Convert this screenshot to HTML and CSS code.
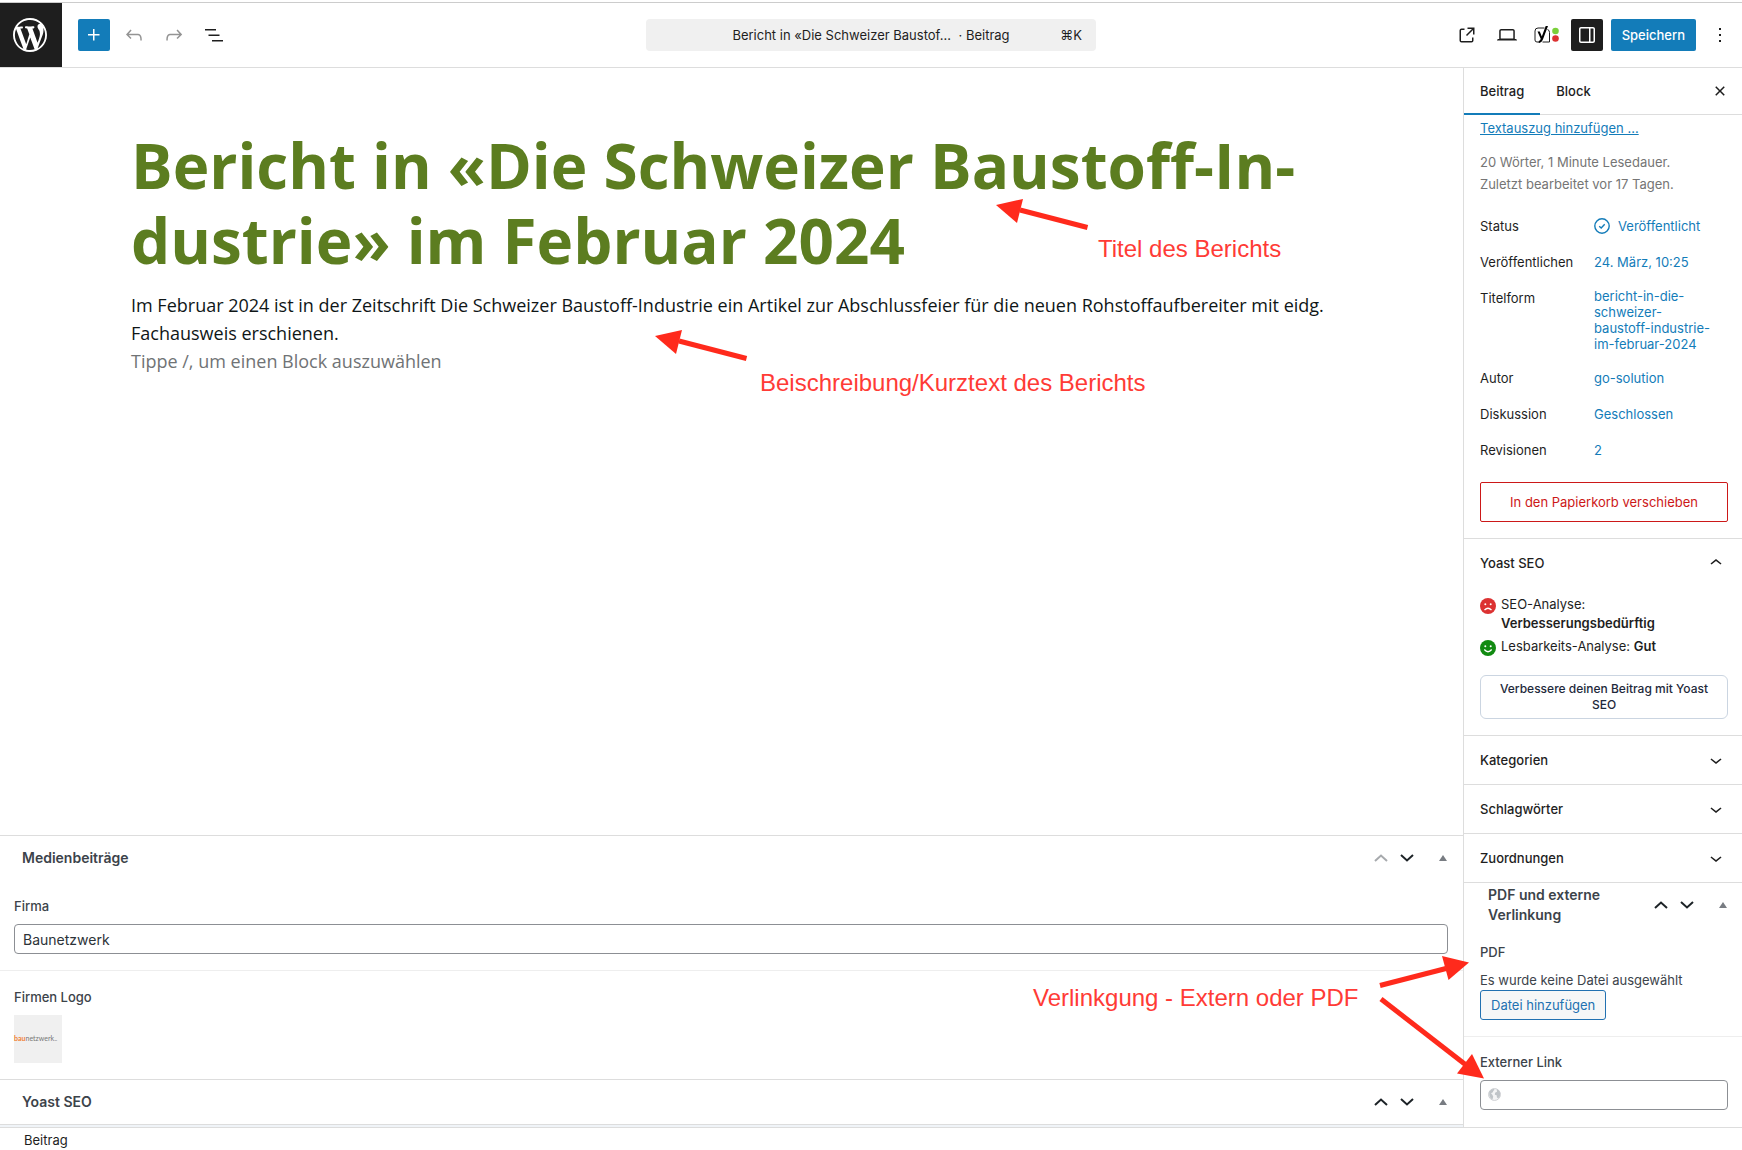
FILE: index.html
```html
<!DOCTYPE html>
<html lang="de">
<head>
<meta charset="utf-8">
<title>Beitrag bearbeiten</title>
<meta name="viewport" content="width=device-width, initial-scale=1">
<link rel="stylesheet" href="styles.css">
</head>
<body>
<svg class="sprite" aria-hidden="true">
  <symbol id="chevron-down" viewBox="0 0 24 24"><path d="M17.5 11.6L12 16l-5.5-4.4.9-1.2L12 14l4.5-3.6 1 1.2z"/></symbol>
  <symbol id="chevron-up" viewBox="0 0 24 24"><path d="M6.5 12.4L12 8l5.5 4.4-.9 1.2L12 10l-4.5 3.6-1-1.2z"/></symbol>
  <symbol id="order-up" viewBox="0 0 14 8"><path d="M1 7l6-5.500L13 7" fill="none" stroke="currentColor" stroke-width="2"/></symbol>
  <symbol id="order-down" viewBox="0 0 14 8"><path d="M1 1l6 5.500L13 1" fill="none" stroke="currentColor" stroke-width="2"/></symbol>
  <symbol id="triangle" viewBox="0 0 8 6"><path d="M4 0l4 6H0z"/></symbol>
</svg>

<header class="topbar">
  <a class="wp-home" href="#" aria-label="Beiträge anzeigen">
    <svg viewBox="0 0 20 20" width="34" height="34"><path d="M20 10c0-5.51-4.49-10-10-10C4.48 0 0 4.49 0 10c0 5.52 4.48 10 10 10 5.51 0 10-4.48 10-10zM7.78 15.37L4.37 6.22c.55-.02 1.17-.08 1.17-.08.5-.06.44-1.13-.06-1.11 0 0-1.45.11-2.37.11-.18 0-.37 0-.58-.01C4.12 2.69 6.87 1.11 10 1.11c2.33 0 4.45.87 6.05 2.34-.68-.11-1.65.39-1.65 1.58 0 .74.45 1.36.9 2.1.35.61.55 1.36.55 2.46 0 1.49-1.4 5-1.4 5l-3.03-8.37c.54-.02.82-.17.82-.17.5-.05.44-1.25-.06-1.22 0 0-1.44.12-2.38.12-.87 0-2.33-.12-2.33-.12-.5-.03-.56 1.2-.06 1.22l.92.08 1.26 3.41zM17.41 10c.24-.64.74-1.87.43-4.25.7 1.29 1.05 2.71 1.05 4.25 0 3.29-1.73 6.24-4.4 7.78.97-2.59 1.94-5.2 2.92-7.78zM6.1 18.09C3.12 16.65 1.11 13.53 1.11 10c0-1.3.23-2.48.72-3.59C3.25 10.3 4.67 14.2 6.1 18.09zm4.03-6.63l2.58 6.98c-.86.29-1.76.45-2.71.45-.79 0-1.57-.11-2.29-.33.81-2.38 1.62-4.74 2.42-7.1z"/></svg>
  </a>
  <div class="tools">
    <button class="icon-btn primary" aria-label="Block hinzufügen"><svg viewBox="0 0 24 24"><path d="M11 12.500V17.500H12.500V12.500H17.500V11H12.500V6H11V11H6V12.500H11Z"/></svg></button>
    <button class="icon-btn muted" aria-label="Rückgängig"><svg viewBox="0 0 24 24"><path d="M18.300 11.700c-.6-.6-1.400-.9-2.300-.9H6.700l2.900-3.300-1.100-1-4.500 5L8.500 16l1-1-2.700-2.700H16c.5 0 .9.2 1.300.5 1 1 1 3.400 1 4.500v.3h1.500v-.2c0-1.500 0-4.300-1.500-5.700z"/></svg></button>
    <button class="icon-btn muted" aria-label="Wiederholen"><svg viewBox="0 0 24 24"><path d="M15.600 6.500l-1.100 1 2.900 3.300H8c-.9 0-1.700.3-2.300.9-1.400 1.500-1.400 4.200-1.400 5.600v.2h1.500v-.3c0-1.100 0-3.500 1-4.500.3-.3.7-.5 1.300-.5h9.200L14.500 15l1.100 1.100 4.600-4.600-4.600-5z"/></svg></button>
    <button class="icon-btn" aria-label="Dokumentübersicht"><svg viewBox="0 0 24 24"><path d="M3 6h11v1.500H3V6Zm3.500 5.500h11V13h-11v-1.500ZM21 17H10v1.500h11V17Z"/></svg></button>
  </div>
  <button class="document-bar">
    <span class="document-title">Bericht in «Die Schweizer Baustof… <span class="document-type">· Beitrag</span></span>
    <span class="shortcut">⌘K</span>
  </button>
  <div class="settings">
    <a class="icon-btn" href="#" aria-label="Beitrag anzeigen"><svg viewBox="0 0 24 24"><path d="M19.500 4.500h-7V6h4.440l-5.970 5.970 1.060 1.060L18 7.060v4.440h1.500v-7Zm-13 1a2 2 0 0 0-2 2v10a2 2 0 0 0 2 2h10a2 2 0 0 0 2-2v-3H17v3a.5.5 0 0 1-.5.5h-10a.5.5 0 0 1-.5-.5v-10a.5.5 0 0 1 .5-.5h3V5.500h-3Z"/></svg></a>
    <button class="icon-btn" aria-label="Ansicht"><svg viewBox="0 0 24 24"><path d="M20.500 16h-.7V8c0-1.100-.9-2-2-2H6.200c-1.100 0-2 .9-2 2v8h-.7c-.8 0-1.500.7-1.500 1.500h20c0-.8-.7-1.500-1.500-1.500zM5.700 8c0-.3.2-.5.5-.5h11.600c.3 0 .5.2.5.5v7.600H5.700V8z"/></svg></button>
    <button class="icon-btn" aria-label="Yoast SEO"><svg class="yoast" viewBox="0 0 26 18"><path d="M10.500 2H4a3 3 0 0 0-3 3v9a2 2 0 0 0 2 2h3M13.500 3.500q2 .5 2 3V16H8.500" fill="none" stroke="#1e1e1e"/><path d="M3.500 5.500h2.300l2 5L11.700 0H14L9.300 12.500Q8 16.500 4.800 17v-2q1.700-.5 1.900-2.200z" fill="#000"/><circle cx="21.500" cy="5" r="3.300" fill="#7ad03a"/><circle cx="21.500" cy="12.500" r="3.300" fill="#dc3232"/></svg></button>
    <button class="icon-btn dark" aria-label="Einstellungen"><svg viewBox="0 0 24 24"><path d="M18 4H6c-1.100 0-2 .9-2 2v12c0 1.100.9 2 2 2h12c1.100 0 2-.9 2-2V6c0-1.100-.9-2-2-2zM5.500 18V6c0-.3.2-.5.5-.5h12c.3 0 .5.2.5.5v12c0 .3-.2.500-.5.500H6c-.3 0-.5-.2-.5-.5z" fill-rule="evenodd"/><path d="M14 5h1.500v14H14z"/></svg></button>
    <button class="save">Speichern</button>
    <button class="icon-btn" aria-label="Optionen"><svg viewBox="0 0 24 24"><path d="M13 19h-2v-2h2v2zm0-6h-2v-2h2v2zm0-6h-2V5h2v2z"/></svg></button>
  </div>
</header>

<div class="workspace">
  <main class="editor">
    <article class="canvas">
      <h1>Bericht in «Die Schweizer Baustoff-In&shy;dustrie» im Februar 2024</h1>
      <p>Im Februar 2024 ist in der Zeitschrift Die Schweizer Baustoff-Industrie ein Artikel zur Abschlussfeier für die neuen Rohstoffaufbereiter mit eidg. Fachausweis erschienen.</p>
      <p class="placeholder">Tippe /, um einen Block auszuwählen</p>
    </article>

    <section class="metabox">
      <header class="metabox-head">
        <h2>Medienbeiträge</h2>
        <div class="order">
          <button class="off" aria-label="Nach oben"><svg width="14" height="8"><use href="#order-up"/></svg></button>
          <button aria-label="Nach unten"><svg width="14" height="8"><use href="#order-down"/></svg></button>
          <button class="toggle" aria-label="Umschalten"><svg width="8" height="6"><use href="#triangle"/></svg></button>
        </div>
      </header>
      <div class="field">
        <label for="firma">Firma</label>
        <input id="firma" type="text" value="Baunetzwerk">
      </div>
      <div class="field ruled">
        <span class="field-label">Firmen Logo</span>
        <div class="logo"><span><b>bau</b>netzwerk<small>.biz</small></span></div>
      </div>
    </section>
    <section class="metabox">
      <header class="metabox-head">
        <h2>Yoast SEO</h2>
        <div class="order">
          <button aria-label="Nach oben"><svg width="14" height="8"><use href="#order-up"/></svg></button>
          <button aria-label="Nach unten"><svg width="14" height="8"><use href="#order-down"/></svg></button>
          <button class="toggle" aria-label="Umschalten"><svg width="8" height="6"><use href="#triangle"/></svg></button>
        </div>
      </header>
      <div class="seo-edge"></div>
    </section>
  </main>

  <aside class="sidebar">
    <div class="tabs">
      <button class="tab active">Beitrag</button>
      <button class="tab">Block</button>
      <button class="close" aria-label="Einstellungen schließen"><svg viewBox="0 0 24 24"><path d="M12 13.060l3.712 3.713 1.061-1.060L13.061 12l3.712-3.712-1.060-1.060L12 10.938 8.288 7.227l-1.061 1.060L10.939 12l-3.712 3.712 1.060 1.061L12 13.061z"/></svg></button>
    </div>

    <section class="summary">
      <a class="excerpt" href="#">Textauszug hinzufügen …</a>
      <p class="info">20 Wörter, 1 Minute Lesedauer.<br>Zuletzt bearbeitet vor 17 Tagen.</p>
      <dl class="facts">
        <dt>Status</dt>
        <dd><button><svg width="16" height="16" viewBox="0 0 16 16"><circle cx="8" cy="8" r="7.200" fill="none" stroke="currentColor" stroke-width="1.400"/><path d="M5.200 8.200l2 1.800 3.500-3.800" fill="none" stroke="currentColor" stroke-width="1.400"/></svg>Veröffentlicht</button></dd>
        <dt>Veröffentlichen</dt><dd><button>24. März, 10:25</button></dd>
        <dt>Titelform</dt><dd><button>bericht-in-die-schweizer-baustoff-industrie-im-februar-2024</button></dd>
        <dt>Autor</dt><dd><button>go-solution</button></dd>
        <dt>Diskussion</dt><dd><button>Geschlossen</button></dd>
        <dt>Revisionen</dt><dd><button>2</button></dd>
      </dl>
      <button class="trash">In den Papierkorb verschieben</button>
    </section>

    <section class="panel">
      <button class="panel-head">Yoast SEO<svg width="24" height="24"><use href="#chevron-up"/></svg></button>
      <ul class="scores">
        <li><svg width="16" height="16" viewBox="0 0 16 16"><circle cx="8" cy="8" r="8" fill="#dc3232"/><circle cx="5.300" cy="6.300" r="1" fill="#fff"/><circle cx="10.700" cy="6.300" r="1" fill="#fff"/><path d="M4.500 12q3.500-3.500 7 0" fill="none" stroke="#fff" stroke-width="1.300"/></svg><span>SEO-Analyse: <b>Verbesserungsbedürftig</b></span></li>
        <li><svg width="16" height="16" viewBox="0 0 16 16"><circle cx="8" cy="8" r="8" fill="#118a11"/><circle cx="5.300" cy="6.300" r="1" fill="#fff"/><circle cx="10.700" cy="6.300" r="1" fill="#fff"/><path d="M4.300 9.500q3.700 4.500 7.400 0" fill="none" stroke="#fff" stroke-width="1.300"/></svg><span>Lesbarkeits-Analyse: <b>Gut</b></span></li>
      </ul>
      <button class="improve">Verbessere deinen Beitrag mit Yoast SEO</button>
    </section>
    <section class="panel"><button class="panel-head">Kategorien<svg width="24" height="24"><use href="#chevron-down"/></svg></button></section>
    <section class="panel"><button class="panel-head">Schlagwörter<svg width="24" height="24"><use href="#chevron-down"/></svg></button></section>
    <section class="panel"><button class="panel-head">Zuordnungen<svg width="24" height="24"><use href="#chevron-down"/></svg></button></section>

    <section class="metabox side">
      <header class="metabox-head">
        <h2>PDF und externe Verlinkung</h2>
        <div class="order">
          <button aria-label="Nach oben"><svg width="14" height="8"><use href="#order-up"/></svg></button>
          <button aria-label="Nach unten"><svg width="14" height="8"><use href="#order-down"/></svg></button>
          <button class="toggle" aria-label="Umschalten"><svg width="8" height="6"><use href="#triangle"/></svg></button>
        </div>
      </header>
      <div class="field">
        <span class="field-label">PDF</span>
        <p>Es wurde keine Datei ausgewählt</p>
        <button class="add-file">Datei hinzufügen</button>
      </div>
      <div class="field ruled">
        <label for="link">Externer Link</label>
        <div class="url">
          <input id="link" type="url">
          <svg width="13" height="13" viewBox="0 0 12 12"><circle cx="6" cy="6" r="5.500" fill="#f3f4f5" stroke="#c8cbce" stroke-width=".8"/><path d="M1.200 3.500Q2.500.8 5.300.6l.8 1.100-1.300 1-.3 1.300-1.700.8L4 6.300l.8 1.500-.6 2.800Q.6 9.200 1.200 3.500zM8 1q2.600 1 3.300 3.500L11 7.500 9.300 9.800 8.200 8.500 8 6.800 6.300 6.200 6.500 4.300 8.300 3.500z" fill="#bfc4c8"/></svg>
        </div>
      </div>
    </section>
  </aside>
</div>

<footer class="breadcrumb">Beitrag</footer>

<div class="notes">
  <svg width="1742" height="1150" viewBox="0 0 1742 1150">
    <g id="note-arrow"><path d="M1020 210l67.500 17.500" stroke="#ff2a1c" stroke-width="5"/><path d="M996 205l27-6-6 24z"/></g>
    <use href="#note-arrow" x="-341" y="131"/>
    <path d="M1380 985.500l66-17" stroke="#ff2a1c" stroke-width="5"/><path d="M1469 962.500l-27-6.500 6.500 24z"/>
    <path d="M1381 999l85 66" stroke="#ff2a1c" stroke-width="5"/><path d="M1484 1078.500l-12-24.500-15 19.500z"/>
  </svg>
  <span class="note note-title">Titel des Berichts</span>
  <span class="note note-text">Beischreibung/Kurztext des Berichts</span>
  <span class="note note-link">Verlinkgung - Extern oder PDF</span>
</div>
</body>
</html>
```
FILE: styles.css
```css
*, *::before, *::after { box-sizing: border-box; }

body {
  margin: 0;
  min-height: 100vh;
  display: flex;
  flex-direction: column;
  position: relative;
  overflow-x: hidden;
  background: #fff;
  color: #1e1e1e;
  font: 13px/20px Inter, "Liberation Sans", sans-serif;
}

h1, h2, p, dl, dd, ul { margin: 0; padding: 0; }
ul { list-style: none; }
svg { display: block; flex: none; fill: currentColor; }
button { margin: 0; padding: 0; border: 0; background: none; color: inherit; font: inherit; }
.sprite { position: absolute; width: 0; height: 0; }

/* Top bar */
.topbar {
  display: grid;
  grid-template-columns: 1fr 450px 1fr;
  align-items: center;
  grid-template-areas: "left doc right";
  margin-top: 2px;
  border-top: 1px solid #ccc;
  border-bottom: 1px solid #ddd;
  height: 66px;
}
.wp-home {
  grid-area: left;
  width: 62px;
  height: 64px;
  display: flex;
  align-items: center;
  padding-left: 13px;
  background: #1e1e1e;
  color: #fff;
}
.tools { grid-area: left; display: flex; gap: 8px; padding-left: 78px; }
.icon-btn {
  width: 32px;
  height: 32px;
  display: flex;
  align-items: center;
  justify-content: center;
  border-radius: 2px;
  color: #1e1e1e;
}
.icon-btn svg { width: 24px; height: 24px; }
.icon-btn .yoast { width: 26px; height: 18px; }
.icon-btn.primary { background: #137cb9; color: #fff; }
.icon-btn.muted { color: #949494; }
.icon-btn.dark { background: #1e1e1e; color: #fff; }
.document-bar {
  grid-area: doc;
  display: grid;
  grid-template-columns: 64px 1fr 64px;
  align-items: center;
  height: 32px;
  padding: 0 14px;
  border-radius: 4px;
  background: #f0f0f0;
}
.document-title { grid-column: 2; white-space: nowrap; }
.document-type { padding-left: 4px; }
.shortcut { text-align: right; }
.settings { grid-area: right; display: flex; justify-content: flex-end; gap: 8px; padding-right: 6px; }
.save { height: 32px; padding: 0 11px; border-radius: 2px; background: #137cb9; color: #fff; font-weight: 500; }

/* Editor column */
.workspace { flex: 1; display: flex; }
.editor { flex: 1; min-width: 0; display: flex; flex-direction: column; }
.canvas { flex: 1; padding: 60px 131px; font: 18px/28px "Open Sans", sans-serif; color: #0f1617; }
.canvas h1 { margin-bottom: 13px; color: #5c7d20; font-size: 62px; font-weight: 700; line-height: 75px; }
.canvas .placeholder { color: #707375; }

/* Meta boxes */
.metabox { border-top: 1px solid #ddd; color: #3c434a; }
.metabox-head { display: flex; align-items: center; justify-content: space-between; height: 44px; padding: 0 11px 0 22px; }
.metabox h2 { font-size: 14px; line-height: 20px; font-weight: 600; }
.order { display: flex; color: #1d2327; }
.order button { width: 26px; height: 26px; display: flex; align-items: center; justify-content: center; }
.order .off { color: #a7aaad; }
.order .toggle { width: 18px; margin-left: 14px; color: #787c82; }
.field { padding: 16px 15px 16px 14px; }
.field.ruled { border-top: 1px solid #eee; }
.field label, .field-label { display: block; margin-bottom: 8px; font-weight: 500; }
.field input {
  display: block;
  width: 100%;
  height: 30px;
  padding: 0 8px;
  border: 1px solid #8c8f94;
  border-radius: 4px;
  background: #fff;
  color: #2c3338;
  font: 14px/20px Inter, sans-serif;
}
.logo { width: 48px; height: 48px; display: flex; align-items: center; background: #f0f0f0; color: #777; font: 7px/12px Lato, sans-serif; }
.logo b { color: #f08030; }
.logo small { font-size: 2px; }
.seo-edge { height: 3px; border-top: 1px solid #ddd; background: #f0f4f8; }

/* Settings sidebar */
.sidebar { width: 279px; flex: none; border-left: 1px solid #ddd; }
.tabs { display: flex; height: 47px; border-bottom: 1px solid #ddd; }
.tab { padding: 0 16px 2px; height: 47px; font-weight: 500; }
.tab.active { box-shadow: inset 0 -2px #137cb9; }
.close { margin-left: auto; padding-right: 10px; }
.close svg { width: 24px; height: 24px; }
.summary { padding: 3px 14px 16px 16px; }
.excerpt { color: #137cb9; }
.info { margin-top: 13px; color: #757575; line-height: 22px; }
.facts { display: grid; grid-template-columns: 114px 1fr; row-gap: 4px; padding: 15px 0 16px; }
.facts dt { padding: 6px 0; }
.facts button {
  display: flex;
  align-items: center;
  gap: 8px;
  min-height: 32px;
  max-width: 124px;
  padding: 6px 0;
  color: #137cb9;
  line-height: 16px;
  text-align: left;
}
.trash { width: 100%; height: 40px; border: 1px solid #cc1818; border-radius: 2px; color: #cc1818; }
.panel { border-top: 1px solid #ddd; }
.panel-head { width: 100%; height: 48px; display: flex; align-items: center; justify-content: space-between; padding: 0 14px 0 16px; font-weight: 500; }
.scores { padding: 8px 14px 0 16px; }
.scores li { display: flex; gap: 5px; margin-bottom: 4px; line-height: 19px; }
.scores li svg { margin-top: 3px; }
.scores b { font-weight: 600; }
.improve {
  display: block;
  width: calc(100% - 30px);
  height: 44px;
  margin: 19px 14px 16px 16px;
  padding: 0 16px;
  border: 1px solid #cbd5e1;
  border-radius: 6px;
  color: #1e293b;
  font-size: 12px;
  font-weight: 500;
  line-height: 16px;
}
.side .metabox-head { padding: 0 10px 0 24px; }
.side .field { padding: 15px 14px 16px 16px; }
.add-file { height: 30px; padding: 0 10px; border: 1px solid #2271b1; border-radius: 3px; background: #f6f7f7; color: #2271b1; }
.url { position: relative; }
.url svg { position: absolute; left: 8px; top: 8px; }
.url input { padding-left: 26px; }

.breadcrumb { height: 23px; padding: 2px 24px 0; border-top: 1px solid #ddd; line-height: 20px; }

/* Red markup drawn over the screen */
.notes { position: absolute; inset: 0; overflow: hidden; pointer-events: none; color: #ff2a1c; }
.note { position: absolute; color: #ff3b36; font: 24px/28px "Liberation Sans", Arial, sans-serif; white-space: nowrap; }
.note-title { left: 1098px; top: 235px; }
.note-text { left: 760px; top: 369px; }
.note-link { left: 1033px; top: 984px; }
```
